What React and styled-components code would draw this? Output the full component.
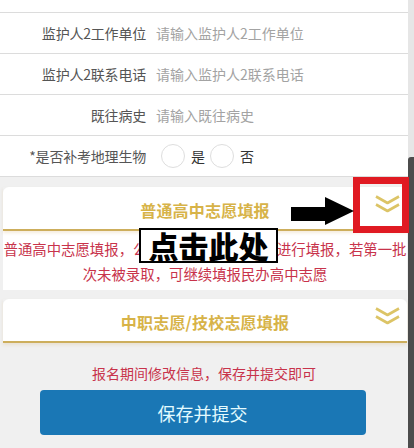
import React from 'react'
import styled, { createGlobalStyle } from 'styled-components'

const Global = createGlobalStyle`
  *{box-sizing:border-box;}
  body{
    margin:0;
    font-family:"Noto Sans CJK SC","Noto Sans",sans-serif;
    background:#fff;
  }
`

const rows = [
  { label: '监护人2工作单位', ph: '请输入监护人2工作单位' },
  { label: '监护人2工作单位', ph: '请输入监护人2工作单位' },
  { label: '监护人2联系电话', ph: '请输入监护人2联系电话' },
  { label: '既往病史', ph: '请输入既往病史' },
]

function Chevron() {
  return (
    <ChevronIcon viewBox="0 0 29 20">
      <polyline points="3,2.5 14.5,9 26,2.5" />
      <polyline points="3,10.5 14.5,17 26,10.5" />
    </ChevronIcon>
  )
}

function App() {
  return (
    <Page>
      <Global />
      <Main>
        <Form>
          {rows.map((r, i) => (
            <Row key={i}>
              <Label>{r.label}</Label>
              <Input placeholder={r.ph} />
            </Row>
          ))}
          <Row>
            <Label>*是否补考地理生物</Label>
            <Radios>
              <Radio /><RadioText>是</RadioText>
              <Radio /><RadioText>否</RadioText>
            </Radios>
          </Row>
        </Form>

        <Card>
          <CardHead>
            <span />
            <Title>普通高中志愿填报</Title>
            <Chevron />
          </CardHead>
          <CardBody>
            普通高中志愿填报，公办高中志愿按照批次进行填报，若第一批次未被录取，可继续填报民办高中志愿
          </CardBody>
        </Card>

        <Card $second>
          <CardHead>
            <span />
            <Title>中职志愿/技校志愿填报</Title>
            <Chevron />
          </CardHead>
        </Card>

        <Footer>
          <Notice>报名期间修改信息，保存并提交即可</Notice>
          <SubmitButton>保存并提交</SubmitButton>
        </Footer>
      </Main>
      <ScrollTrack>
        <ScrollThumb />
      </ScrollTrack>

      <RedBox />
      <Arrow viewBox="0 0 63 29">
        <polygon points="0,10 34,10 34,0 63,14 34,28 34,24 0,24" />
      </Arrow>
      <Callout>点击此处</Callout>
    </Page>
  )
}

export default App

const Page = styled.div`
  position:relative;
  width:414px;
  height:448px;
  overflow:hidden;
  display:flex;
`
const Main = styled.div`
  width:408px;
  background:#f0f0f0;
  display:flex;
  flex-direction:column;
`
const Form = styled.div`
  background:#fff;
  margin-top:-28px;
`
const Row = styled.div`
  height:41px;
  border-bottom:1px solid #dcdcdc;
  display:flex;
  align-items:center;
  font-size:14px;
`
const Label = styled.div`
  width:146px;
  text-align:right;
  color:#555;
  white-space:nowrap;
  letter-spacing:-0.2px;
`
const Input = styled.input`
  margin-left:10px;
  border:none;
  outline:none;
  background:transparent;
  font:inherit;
  font-size:14px;
  color:#333;
  padding:0;
  flex:1;
  &::placeholder{
    color:#a3a3a3;
  }
`
const Radios = styled.div`
  display:flex;
  align-items:center;
  margin-left:15px;
`
const Radio = styled.span`
  width:24px;
  height:24px;
  border-radius:50%;
  border:1px solid #dedede;
  background:#fff;
`
const RadioText = styled.span`
  color:#333;
  margin:0 5px 0 6px;
`
const Card = styled.div`
  background:#fff;
  margin:${p => p.$second ? '9px 1px 0 3px' : '10px 1px 0 3px'};
  border-radius:6px 6px 0 0;
`
const CardHead = styled.div`
  height:44px;
  display:grid;
  grid-template-columns:40px 1fr 40px;
  align-items:center;
  border-bottom:2px solid #cdae5c;
  box-shadow:0 2px 3px rgba(215,180,120,0.25);
`
const Title = styled.div`
  text-align:center;
  color:#d7b348;
  font-size:16px;
  font-weight:700;
  letter-spacing:0.2px;
  padding-top:3px;
`
const ChevronIcon = styled.svg`
  width:29px;
  height:20px;
  justify-self:end;
  align-self:start;
  margin-top:7px;
  margin-right:5px;
  polyline{
    fill:none;
    stroke:#dcc466;
    stroke-width:2.6;
    stroke-linejoin:round;
  }
`
const CardBody = styled.div`
  padding:5px 0 4px;
  color:#c8334b;
  font-size:14.4px;
  line-height:25px;
  text-align:center;
`
const Footer = styled.div`
  display:flex;
  flex-direction:column;
  align-items:center;
`
const Notice = styled.div`
  margin-top:20px;
  color:#c8334b;
  font-size:14px;
  line-height:20px;
`
const SubmitButton = styled.button`
  margin-top:7px;
  width:326px;
  height:45px;
  border:none;
  border-radius:4px;
  background:#1a77b5;
  color:#e3fbff;
  font-family:inherit;
  font-size:18px;
  margin-left:-3px;
`
const ScrollTrack = styled.div`
  width:6px;
  background:#e6e6e6;
  display:flex;
  flex-direction:column;
  padding-top:157px;
`
const ScrollThumb = styled.div`
  flex:1;
  background:#4c4c4c;
  border-radius:3px 0 0 0;
`
const RedBox = styled.div`
  position:absolute;
  left:353px;
  top:177px;
  width:56px;
  height:56px;
  border:7px solid #e01a22;
`
const Arrow = styled.svg`
  position:absolute;
  left:291px;
  top:197px;
  width:63px;
  height:29px;
  polygon{fill:#000;}
`
const Callout = styled.div`
  position:absolute;
  left:139px;
  top:228px;
  width:139px;
  height:35px;
  border:2px solid #000;
  background:#fff;
  color:#000;
  font-size:30px;
  font-weight:900;
  line-height:31px;
  text-align:center;
`
